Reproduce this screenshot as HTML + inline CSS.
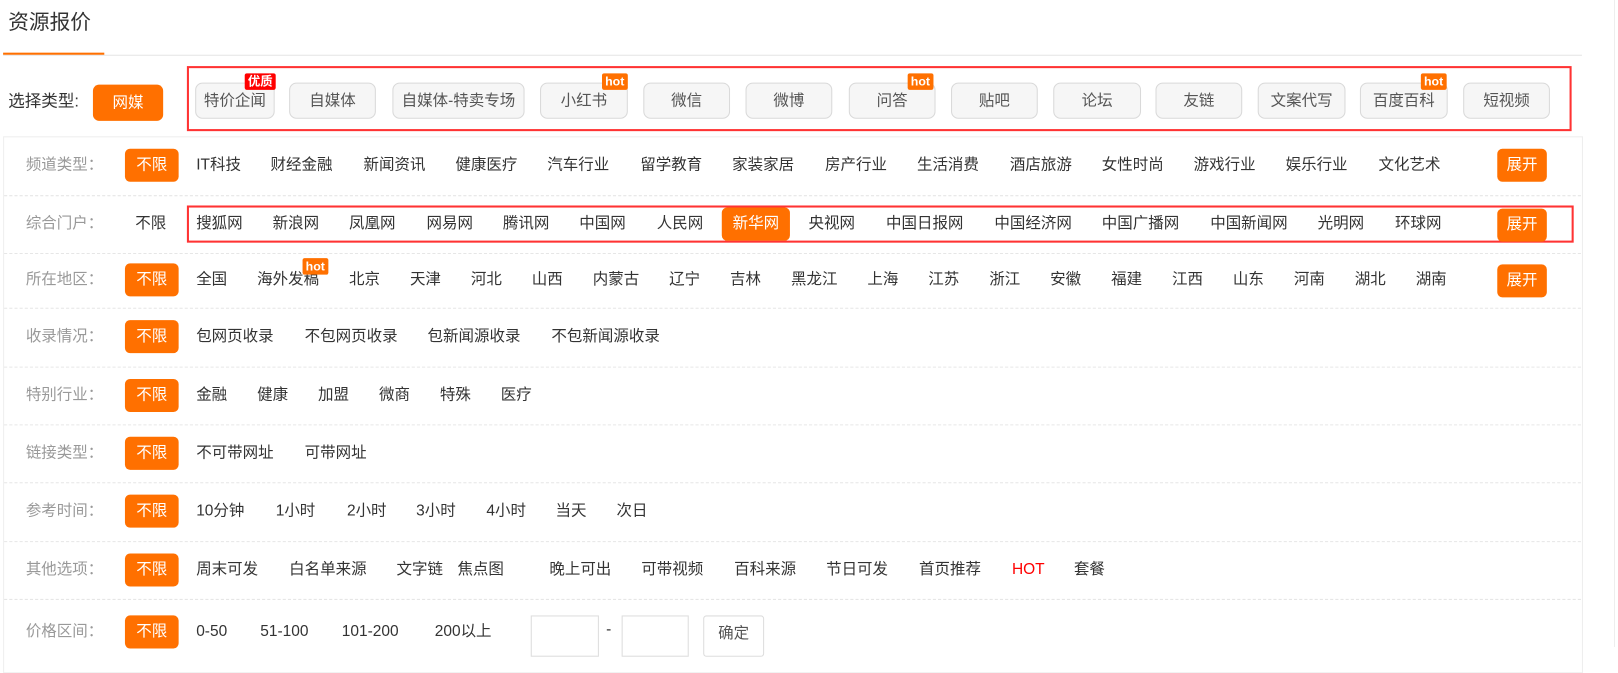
<!DOCTYPE html><html><head><meta charset="utf-8"><style>
*{margin:0;padding:0;box-sizing:border-box}
body{width:1618px;height:647px;background:#fff;position:relative;overflow:hidden;font-family:"Liberation Sans","Noto Sans CJK SC",sans-serif;color:#333}
div,span{position:absolute}
#w{left:0;top:0;width:1567px;height:627px;transform:scale(1.0326);transform-origin:0 0}
.t{font-size:15px;line-height:20px;white-space:nowrap;color:#333}
.l{font-size:15px;line-height:20px;color:#999;left:25px}
.ob{background:#ff7000;color:#fff;font-size:15px;border-radius:5px;text-align:center;height:32px;line-height:32px}
.gb{background:#f6f6f6;border:1px solid #d9d9d9;border-radius:7px;height:35px;line-height:33px;text-align:center;font-size:15px;color:#555;top:80px}
.hot{background:#ff7000;color:#fff;font-size:12px;font-weight:bold;line-height:16px;height:16px;padding:0 3px;border-radius:2px}
.sep{left:4px;width:1527px;border-top:1px dashed #e6e6e6;height:0}
.red{border:2px solid #f33}
</style></head><body>
<div style="left:1614px;top:0;width:1px;height:647px;background:#eee"></div>
<div id="w">
<div style="left:8px;top:8px;font-size:20px;line-height:28px;color:#333">资源报价</div>
<div style="left:3px;top:53px;width:1529px;height:1px;background:#e5e5e5"></div>
<div style="left:3px;top:51px;width:98px;height:2px;background:#ff7000"></div>
<div style="left:8px;top:88px;font-size:16px;line-height:22px">选择类型:</div>
<div class="ob" style="left:90px;top:82px;width:68px;height:35px;line-height:35px;border-radius:6px">网媒</div>
<div class="red" style="left:181px;top:64px;width:1341px;height:63px"></div>
<div class="gb" style="left:189px;width:77px">特价企闻</div>
<div class="gb" style="left:280px;width:84px">自媒体</div>
<div class="gb" style="left:380px;width:128px">自媒体-特卖专场</div>
<div class="gb" style="left:523px;width:85px">小红书</div>
<div class="gb" style="left:623px;width:84px">微信</div>
<div class="gb" style="left:722px;width:84px">微博</div>
<div class="gb" style="left:822px;width:84px">问答</div>
<div class="gb" style="left:921px;width:84px">贴吧</div>
<div class="gb" style="left:1020px;width:85px">论坛</div>
<div class="gb" style="left:1119px;width:84px">友链</div>
<div class="gb" style="left:1218px;width:85px">文案代写</div>
<div class="gb" style="left:1317px;width:85px">百度百科</div>
<div class="gb" style="left:1417px;width:84px">短视频</div>
<span class="hot" style="left:237px;top:71px;background:#f00">优质</span>
<span class="hot" style="left:583px;top:71px">hot</span>
<span class="hot" style="left:879px;top:71px">hot</span>
<span class="hot" style="left:1376px;top:71px">hot</span>

<div style="left:3px;top:132px;width:1530px;height:520px;border:1px solid #eee"></div>
<div class="sep" style="top:189px"></div><div class="sep" style="top:245px"></div>
<div class="sep" style="top:298px"></div><div class="sep" style="top:355px"></div>
<div class="sep" style="top:411px"></div><div class="sep" style="top:467px"></div>
<div class="sep" style="top:524px"></div><div class="sep" style="top:580px"></div>

<span class="l" style="top:150px">频道类型：</span>
<div class="ob" style="left:121px;top:144px;width:52px">不限</div>
<span class="t" style="left:190px;top:150px">IT科技</span><span class="t" style="left:262px;top:150px">财经金融</span><span class="t" style="left:352px;top:150px">新闻资讯</span><span class="t" style="left:441px;top:150px">健康医疗</span><span class="t" style="left:530px;top:150px">汽车行业</span><span class="t" style="left:620px;top:150px">留学教育</span><span class="t" style="left:709px;top:150px">家装家居</span><span class="t" style="left:799px;top:150px">房产行业</span><span class="t" style="left:888px;top:150px">生活消费</span><span class="t" style="left:978px;top:150px">酒店旅游</span><span class="t" style="left:1067px;top:150px">女性时尚</span><span class="t" style="left:1156px;top:150px">游戏行业</span><span class="t" style="left:1245px;top:150px">娱乐行业</span><span class="t" style="left:1335px;top:150px">文化艺术</span>
<div class="ob" style="left:1450px;top:144px;width:48px">展开</div>

<span class="l" style="top:207px">综合门户：</span>
<span class="t" style="left:131px;top:207px">不限</span>
<div class="red" style="left:181px;top:199px;width:1343px;height:36px"></div>
<span class="t" style="left:190px;top:207px">搜狐网</span><span class="t" style="left:264px;top:207px">新浪网</span><span class="t" style="left:338px;top:207px">凤凰网</span><span class="t" style="left:413px;top:207px">网易网</span><span class="t" style="left:487px;top:207px">腾讯网</span><span class="t" style="left:561px;top:207px">中国网</span><span class="t" style="left:636px;top:207px">人民网</span>
<div class="ob" style="left:699px;top:201px;width:66px">新华网</div>
<span class="t" style="left:783px;top:207px">央视网</span><span class="t" style="left:858px;top:207px">中国日报网</span><span class="t" style="left:963px;top:207px">中国经济网</span><span class="t" style="left:1067px;top:207px">中国广播网</span><span class="t" style="left:1172px;top:207px">中国新闻网</span><span class="t" style="left:1276px;top:207px">光明网</span><span class="t" style="left:1351px;top:207px">环球网</span>
<div class="ob" style="left:1450px;top:202px;width:48px">展开</div>

<span class="l" style="top:261px">所在地区：</span>
<div class="ob" style="left:121px;top:255px;width:52px">不限</div>
<span class="t" style="left:190px;top:261px">全国</span><span class="t" style="left:249px;top:261px">海外发稿</span><span class="t" style="left:338px;top:261px">北京</span><span class="t" style="left:397px;top:261px">天津</span><span class="t" style="left:456px;top:261px">河北</span><span class="t" style="left:515px;top:261px">山西</span><span class="t" style="left:574px;top:261px">内蒙古</span><span class="t" style="left:648px;top:261px">辽宁</span><span class="t" style="left:707px;top:261px">吉林</span><span class="t" style="left:766px;top:261px">黑龙江</span><span class="t" style="left:840px;top:261px">上海</span><span class="t" style="left:899px;top:261px">江苏</span><span class="t" style="left:958px;top:261px">浙江</span><span class="t" style="left:1017px;top:261px">安徽</span><span class="t" style="left:1076px;top:261px">福建</span><span class="t" style="left:1135px;top:261px">江西</span><span class="t" style="left:1194px;top:261px">山东</span><span class="t" style="left:1253px;top:261px">河南</span><span class="t" style="left:1312px;top:261px">湖北</span><span class="t" style="left:1371px;top:261px">湖南</span>
<span class="hot" style="left:293px;top:250px">hot</span>
<div class="ob" style="left:1450px;top:256px;width:48px">展开</div>

<span class="l" style="top:316px">收录情况：</span>
<div class="ob" style="left:121px;top:310px;width:52px">不限</div>
<span class="t" style="left:190px;top:316px">包网页收录</span><span class="t" style="left:295px;top:316px">不包网页收录</span><span class="t" style="left:414px;top:316px">包新闻源收录</span><span class="t" style="left:534px;top:316px">不包新闻源收录</span>

<span class="l" style="top:373px">特别行业：</span>
<div class="ob" style="left:121px;top:367px;width:52px">不限</div>
<span class="t" style="left:190px;top:373px">金融</span><span class="t" style="left:249px;top:373px">健康</span><span class="t" style="left:308px;top:373px">加盟</span><span class="t" style="left:367px;top:373px">微商</span><span class="t" style="left:426px;top:373px">特殊</span><span class="t" style="left:485px;top:373px">医疗</span>

<span class="l" style="top:429px">链接类型：</span>
<div class="ob" style="left:121px;top:423px;width:52px">不限</div>
<span class="t" style="left:190px;top:429px">不可带网址</span><span class="t" style="left:295px;top:429px">可带网址</span>

<span class="l" style="top:485px">参考时间：</span>
<div class="ob" style="left:121px;top:479px;width:52px">不限</div>
<span class="t" style="left:190px;top:485px">10分钟</span><span class="t" style="left:267px;top:485px">1小时</span><span class="t" style="left:336px;top:485px">2小时</span><span class="t" style="left:403px;top:485px">3小时</span><span class="t" style="left:471px;top:485px">4小时</span><span class="t" style="left:538px;top:485px">当天</span><span class="t" style="left:597px;top:485px">次日</span>

<span class="l" style="top:542px">其他选项：</span>
<div class="ob" style="left:121px;top:536px;width:52px">不限</div>
<span class="t" style="left:190px;top:542px">周末可发</span><span class="t" style="left:280px;top:542px">白名单来源</span><span class="t" style="left:384px;top:542px">文字链</span><span class="t" style="left:443px;top:542px">焦点图</span><span class="t" style="left:532px;top:542px">晚上可出</span><span class="t" style="left:621px;top:542px">可带视频</span><span class="t" style="left:711px;top:542px">百科来源</span><span class="t" style="left:800px;top:542px">节日可发</span><span class="t" style="left:890px;top:542px">首页推荐</span><span class="t" style="left:980px;top:542px;color:#f00">HOT</span><span class="t" style="left:1040px;top:542px">套餐</span>

<span class="l" style="top:602px">价格区间：</span>
<div class="ob" style="left:121px;top:596px;width:52px">不限</div>
<span class="t" style="left:190px;top:602px">0-50</span><span class="t" style="left:252px;top:602px">51-100</span><span class="t" style="left:331px;top:602px">101-200</span><span class="t" style="left:421px;top:602px">200以上</span>
<div style="left:514px;top:596px;width:66px;height:40px;border:1px solid #ddd"></div>
<span class="t" style="left:587px;top:600px">-</span>
<div style="left:602px;top:596px;width:65px;height:40px;border:1px solid #ddd"></div>
<div style="left:681px;top:596px;width:59px;height:40px;border:1px solid #ddd;border-radius:3px;font-size:15px;color:#555;text-align:center;line-height:34px">确定</div>
</div>
</body></html>
